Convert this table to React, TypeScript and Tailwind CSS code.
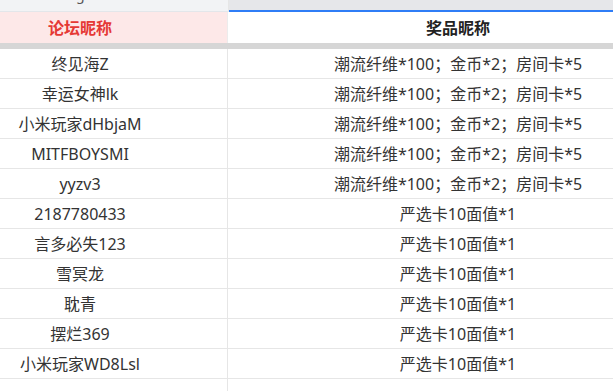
import React from "react";

const rowsA = ["终见海Z", "幸运女神lk", "小米玩家dHbjaM", "MITFBOYSMI", "yyzv3"];
const rowsB = ["2187780433", "言多必失123", "雪冥龙", "耽青", "摆烂369", "小米玩家WD8Lsl"];

const font = { fontFamily: '"Noto Sans", "Noto Sans CJK SC", sans-serif' };

function Row({ name, prize }: { name: string; prize: string }) {
  return (
    <div className="flex h-[30px] border-b border-[#e6e6e6]">
      <div className="w-[228px] shrink-0 border-r border-[#e6e6e6] flex items-center">
        <div className="w-[160px] text-center whitespace-nowrap text-[16px] text-[#333]">{name}</div>
      </div>
      <div className="flex-1 flex items-center overflow-hidden">
        <div className="w-[460px] shrink-0 text-center whitespace-nowrap text-[16px] text-[#333]">
          {prize}
        </div>
      </div>
    </div>
  );
}

export default function App() {
  return (
    <div className="w-[613px] h-[391px] overflow-hidden bg-white" style={font}>
      {/* top tab strip */}
      <div className="flex h-[12px]">
        <div className="w-[228px] shrink-0 bg-[#f2f3f5] border-b border-[#e3e6ea] overflow-hidden relative">
          <span className="absolute left-[76px] top-[-13px] text-[14px] leading-[16px] text-[#555]">g</span>
        </div>
        <div className="w-[1px] shrink-0 bg-[#e6e6e6]" />
        <div className="flex-1 bg-[#e6e7ea] border-b-2 border-[#2f7df6] overflow-hidden relative">
          <span className="absolute left-[225px] top-[-14px] text-[14px] leading-[16px] text-[#555]">n</span>
        </div>
      </div>
      {/* header */}
      <div className="flex h-[31px]">
        <div className="w-[228px] shrink-0 bg-[#fde8e8] border-r border-[#ececec] flex items-center">
          <div className="w-[160px] text-center font-bold text-[16px] text-[#e53935]">论坛昵称</div>
        </div>
        <div className="flex-1 bg-white flex items-center overflow-hidden">
          <div className="w-[460px] shrink-0 text-center font-bold text-[16px] text-[#222]">奖品昵称</div>
        </div>
      </div>
      {/* separator */}
      <div className="h-[6px] bg-[#d6d6d6]" />
      {/* body */}
      {rowsA.map((n) => (
        <Row key={n} name={n} prize="潮流纤维*100；金币*2；房间卡*5" />
      ))}
      {rowsB.map((n) => (
        <Row key={n} name={n} prize="严选卡10面值*1" />
      ))}
      <Row name="" prize="" />
    </div>
  );
}
